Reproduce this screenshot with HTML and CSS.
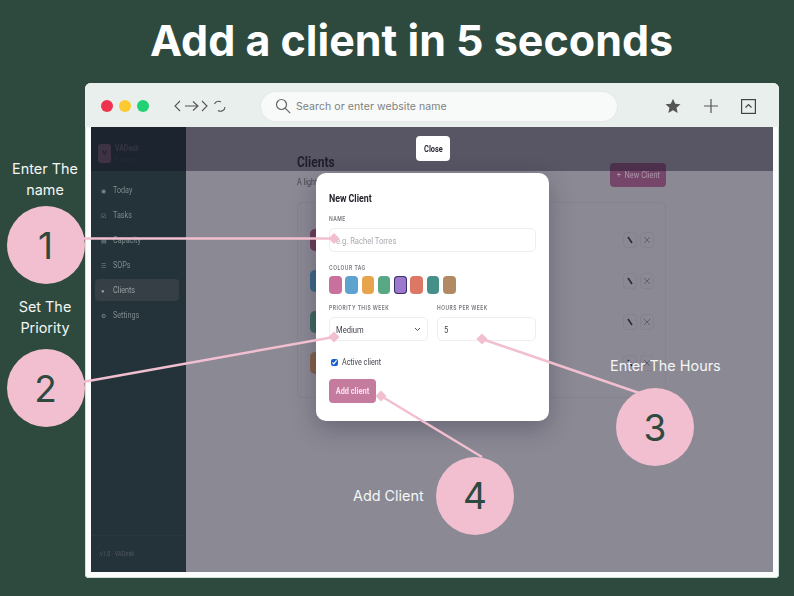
FILE: index.html
```html
<!DOCTYPE html>
<html lang="en">
<head>
<meta charset="utf-8">
<title>Add a client in 5 seconds</title>
<link rel="stylesheet" href="styles.css">
</head>
<body>
<div class="stage">
  <h1 class="headline">Add a client in 5 seconds</h1>
  <div class="window">
    <div class="toolbar">
      <div class="dots"><span class="dot red"></span><span class="dot yellow"></span><span class="dot green"></span></div>
      <svg class="nav-icons" width="52" height="14" viewBox="0 0 52 14" fill="none" stroke="#555" stroke-width="1.1">
        <path d="M6 2 1 7l5 5"/><path d="M11 7h13M19 2.500l5 4.500-5 4.500"/><path d="m28 2 5 5-5 5"/>
        <path d="M40.500 5a4.500 4.500 0 0 1 6.500-2M51 8a4.500 4.500 0 0 1-7 3.500"/>
      </svg>
      <div class="search">
        <svg width="16" height="16" viewBox="0 0 16 16" fill="none" stroke="#666" stroke-width="1.2"><circle cx="6.500" cy="6.500" r="5"/><path d="m10.200 10.200 5 5"/></svg>
        <span>Search or enter website name</span>
      </div>
      <div class="tools">
        <svg width="16" height="16" viewBox="0 0 16 16" fill="#555"><path d="m8 .8 2.200 4.900 5.300.6-4 3.500 1.200 5.300L8 12.300l-4.700 2.800 1.200-5.300-4-3.500 5.300-.6z"/></svg>
        <svg width="16" height="16" viewBox="0 0 16 16" fill="none" stroke="#555" stroke-width="1.200"><path d="M8 1v14M1 8h14"/></svg>
        <svg width="15" height="15" viewBox="0 0 15 15" fill="none" stroke="#444" stroke-width="1.200"><rect x=".6" y=".6" width="13.800" height="13.800"/><path d="m4.500 8.500 3-3 3 3"/></svg>
      </div>
    </div>
    <div class="app">
      <aside class="sidebar">
        <div class="brand">
          <span class="logo">V</span>
          <div><div class="brand-name"><span class="sq">VADesk</span></div><div class="brand-sub"><span class="sq">Planning</span></div></div>
        </div>
        <nav class="menu">
          <div class="menu-item"><span class="menu-icon">◉</span><span class="sq">Today</span></div>
          <div class="menu-item"><span class="menu-icon">☑</span><span class="sq">Tasks</span></div>
          <div class="menu-item"><span class="menu-icon">▤</span><span class="sq">Capacity</span></div>
          <div class="menu-item"><span class="menu-icon">☰</span><span class="sq">SOPs</span></div>
          <div class="menu-item active"><span class="menu-icon">●</span><span class="sq">Clients</span></div>
          <div class="menu-item"><span class="menu-icon">⚙</span><span class="sq">Settings</span></div>
        </nav>
        <div class="side-foot"><span class="sq">v1.0 · VADesk</span></div>
      </aside>
      <main class="page">
        <div class="page-head">
          <div>
            <h2 class="page-title"><span class="sq">Clients</span></h2>
            <p class="page-sub"><span class="sq">A lightweight list of clients</span></p>
          </div>
          <div class="new-btn"><span class="sq-c">+&nbsp; New Client</span></div>
        </div>
        <section class="client-card">
          <div class="client-row"><span class="client-tag t1"></span><span class="actions"><span class="act"><svg class="pencil" viewBox="0 0 14 16"><path d="M5 5l4 6"/></svg></span><span class="act"><svg class="cross" viewBox="0 0 14 16"><path d="m4 5 6 6m0-6-6 6"/></svg></span></span></div>
          <div class="client-row"><span class="client-tag t2"></span><span class="actions"><span class="act"><svg class="pencil" viewBox="0 0 14 16"><path d="M5 5l4 6"/></svg></span><span class="act"><svg class="cross" viewBox="0 0 14 16"><path d="m4 5 6 6m0-6-6 6"/></svg></span></span></div>
          <div class="client-row"><span class="client-tag t3"></span><span class="actions"><span class="act"><svg class="pencil" viewBox="0 0 14 16"><path d="M5 5l4 6"/></svg></span><span class="act"><svg class="cross" viewBox="0 0 14 16"><path d="m4 5 6 6m0-6-6 6"/></svg></span></span></div>
          <div class="client-row"><span class="client-tag t4"></span><span class="actions"><span class="act"><svg class="pencil" viewBox="0 0 14 16"><path d="M5 5l4 6"/></svg></span><span class="act"><svg class="cross" viewBox="0 0 14 16"><path d="m4 5 6 6m0-6-6 6"/></svg></span></span></div>
        </section>
      </main>
      <div class="band"></div>
      <div class="close-btn"><span class="sq-c">Close</span></div>
      <form class="modal">
        <div class="modal-title"><span class="sq">New Client</span></div>
        <div class="label first"><span class="sq">NAME</span></div>
        <div class="field placeholder"><span class="sq">e.g. Rachel Torres</span></div>
        <div class="label gap-lg"><span class="sq">COLOUR TAG</span></div>
        <div class="swatches">
          <span class="swatch s1"></span><span class="swatch s2"></span><span class="swatch s3"></span><span class="swatch s4"></span>
          <span class="swatch s5 selected"></span><span class="swatch s6"></span><span class="swatch s7"></span><span class="swatch s8"></span>
        </div>
        <div class="two-col">
          <div>
            <div class="label"><span class="sq">PRIORITY THIS WEEK</span></div>
            <div class="field select"><span class="sq">Medium</span>
              <svg width="7" height="5" viewBox="0 0 7 5" fill="none" stroke="#555" stroke-width="1"><path d="m1 1 2.500 2.500L6 1"/></svg>
            </div>
          </div>
          <div>
            <div class="label"><span class="sq">HOURS PER WEEK</span></div>
            <div class="field"><span class="sq">5</span></div>
          </div>
        </div>
        <label class="check-row"><input class="check" type="checkbox" checked><span class="sq">Active client</span></label>
        <div class="submit"><span class="sq-c">Add client</span></div>
      </form>
    </div>
  </div>

  <svg class="connectors" width="794" height="596" viewBox="0 0 794 596" fill="none" stroke="#f2bfd0" stroke-width="2.500">
    <path d="M80 238.500H334"/><path d="M80 382.500 334 337"/><path d="M482 339 645 395"/><path d="M381 396 482 457"/>
    <g fill="#f2bfd0" stroke="none">
      <path d="m334 233 5.500 5.500-5.500 5.500-5.500-5.500z"/>
      <path d="m334 331.500 5.500 5.500-5.500 5.500-5.500-5.500z"/>
      <path d="m482 333.500 5.500 5.500-5.500 5.500-5.500-5.500z"/>
      <path d="m381 390.500 5.500 5.500-5.500 5.500-5.500-5.500z"/>
    </g>
  </svg>
  <div class="badge b1">1</div>
  <div class="badge b2">2</div>
  <div class="badge b3">3</div>
  <div class="badge b4">4</div>
  <div class="note n1">Enter The<br>name</div>
  <div class="note n2">Set The<br>Priority</div>
  <div class="note n3">Enter The Hours</div>
  <div class="note n4">Add Client</div>
</div>
</body>
</html>
```
FILE: styles.css
```css
* { box-sizing: border-box; }
html, body { margin: 0; padding: 0; }
body { background: #2e4a3f; font-family: Inter, "Liberation Sans", sans-serif; }
.stage { position: relative; width: 794px; height: 596px; overflow: hidden; background: #2e4a3f; }
.headline { margin: 0; padding: 13px 0 0 29px; height: 83px; text-align: center; color: #fff; font-size: 43px; line-height: 54px; font-weight: 700; }

.sq { display: inline-block; transform: scaleX(.8); transform-origin: left center; white-space: nowrap; }
.sq-c { display: inline-block; transform: scaleX(.82); transform-origin: center; white-space: nowrap; }

.window { display: flex; flex-direction: column; width: 694px; height: 495px; margin-left: 85px; padding: 0 6px 6px; background: #fbfdfc; border-radius: 6px 6px 4px 4px; box-shadow: inset 0 0 0 1px #cfe0d8; }
.toolbar { display: flex; align-items: center; flex: 0 0 44px; margin: 0 -6px; padding: 2px 23px 0 16px; background: #e9efed; border-radius: 6px 6px 0 0; }
.dots { display: flex; gap: 6px; }
.dot { width: 12px; height: 12px; border-radius: 50%; }
.red { background: #ee3350; } .yellow { background: #fcc92e; } .green { background: #20d273; }
.nav-icons { margin-left: 25px; }
.search { display: flex; align-items: center; gap: 5px; width: 356px; height: 29px; margin-left: 35px; padding-left: 14px; border-radius: 15px; background: #f8faf9; box-shadow: 0 0 2px #d8dfdc; color: #7c8180; font-size: 10.500px; letter-spacing: .08px; }
.tools { display: flex; align-items: center; gap: 22px; margin-left: auto; }

.app { position: relative; display: flex; flex: 1; min-height: 0; overflow: hidden; background: #8b8994; font-family: Roboto, sans-serif; }
.sidebar { display: flex; flex-direction: column; flex: 0 0 95px; background: #24333a; color: #7f8a8c; filter: blur(.5px); }
.brand { display: flex; align-items: center; gap: 4px; height: 44px; padding: 8px 7px 0; font-size: 8.500px; color: #4c4d5a; }
.logo { display: flex; align-items: center; justify-content: center; flex: 0 0 13px; height: 19px; border-radius: 3px; background: #5d4a60; color: #35303f; font-size: 7px; font-weight: 700; }
.brand-name { font-weight: 700; }
.brand-sub { font-size: 6.500px; color: #383b48; margin-top: 3px; }
.menu { display: flex; flex-direction: column; gap: 3px; padding: 8px 7px 0 4px; font-size: 9px; }
.menu-item { display: flex; align-items: center; height: 22px; padding-left: 6px; border-radius: 4px; }
.menu-icon { flex: 0 0 12px; font-size: 6px; }
.active { background: #353f45; color: #989fa2; }
.side-foot { margin-top: auto; height: 37px; padding: 14px 9px 0; border-top: 1px solid #2a383f; font-size: 7px; color: #4f585d; }

.page { flex: 1; padding: 26px 107px 0 111px; filter: blur(.5px); }
.page-head { display: flex; justify-content: space-between; align-items: flex-start; height: 49px; }
.page-title { margin: 0; font-size: 15px; line-height: 18px; color: #2a2934; font-weight: 700; }
.page-sub { margin: 6px 0 0; font-size: 9px; line-height: 10px; color: #45444f; white-space: nowrap; }
.new-btn { display: flex; align-items: center; justify-content: center; width: 56px; height: 24px; margin-top: 10px; border-radius: 4px; background: #75466a; color: #ad98a9; font-size: 9px; }
.client-card { height: 196px; padding: 16px 11px 0 12px; border: 1px solid #85838e; border-radius: 6px; }
.client-row { display: flex; justify-content: space-between; align-items: center; height: 41px; }
.client-tag { width: 22px; height: 22px; border-radius: 5px; }
.t1 { background: #6b3d5c; } .t2 { background: #3e6688; } .t3 { background: #3d6860; } .t4 { background: #84604a; }
.actions { display: flex; gap: 3px; }
.act { display: flex; align-items: center; justify-content: center; width: 14px; height: 16px; border: 1px solid #84828d; border-radius: 4px; }
.pencil { width: 14px; height: 16px; flex: none; fill: none; stroke: #2b2a38; stroke-width: 1.600; }
.cross { width: 14px; height: 16px; flex: none; fill: none; stroke: #55545f; stroke-width: .8; }

.band { position: absolute; left: 0; top: 0; right: 0; height: 44px; background: rgba(18, 16, 34, .42); }
.close-btn { position: absolute; left: 325px; top: 9px; display: flex; align-items: center; justify-content: center; width: 34px; height: 25px; border-radius: 4px; background: #fff; color: #2b2a36; font-size: 9px; font-weight: 700; }

.modal { position: absolute; left: 225px; top: 46px; width: 233px; height: 248px; padding: 20px 13px 0; border-radius: 10px; background: #fff; box-shadow: 0 8px 24px rgba(30, 25, 45, .3); color: #2b2a36; }
.modal-title { font-size: 11px; line-height: 12px; font-weight: 700; color: #23222c; }
.label { margin-bottom: 5px; font-size: 6.200px; line-height: 8px; letter-spacing: .6px; font-weight: 600; color: #75757d; font-family: Inter, sans-serif; white-space: nowrap; }
.first { margin-top: 10px; }
.gap-lg { margin-top: 12px; margin-bottom: 4px; }
.field { display: flex; align-items: center; height: 24px; padding-left: 6px; border: 1px solid #eeeef1; border-radius: 5px; font-size: 9.500px; color: #45444e; }
.placeholder { color: #a9a9b0; }
.select { justify-content: space-between; padding-right: 6px; }
.swatches { display: flex; gap: 3.800px; }
.swatch { width: 12.500px; height: 18px; border-radius: 4px; }
.s1 { background: #c9709c; } .s2 { background: #5ea3cf; } .s3 { background: #e8a44c; } .s4 { background: #58a886; }
.s5 { background: #9c79cc; } .s6 { background: #dd7766; } .s7 { background: #46908a; } .s8 { background: #b18a63; }
.selected { box-shadow: inset 0 0 0 1px #3a2f66; }
.two-col { display: grid; grid-template-columns: 99px 99px; gap: 9px; margin-top: 10px; }
.check-row { display: flex; align-items: center; gap: 4px; height: 10px; margin-top: 16px; font-size: 9px; color: #45444e; }
.check { width: 7px; height: 7px; margin: 0 0 0 2px; accent-color: #1a5fd0; }
.submit { display: flex; align-items: center; justify-content: center; width: 47px; height: 24px; margin-top: 12px; border-radius: 4px; background: #c57b9e; color: #f4e3ec; font-size: 9px; font-weight: 700; }

.connectors { position: absolute; left: 0; top: 0; }
.badge { position: absolute; display: flex; align-items: center; justify-content: center; width: 78px; height: 78px; border-radius: 50%; background: #f2bfd0; color: #2e4a3f; font-size: 37px; }
.b1 { left: 6.500px; top: 206px; }
.b2 { left: 6.500px; top: 349px; }
.b3 { left: 616px; top: 388px; }
.b4 { left: 436px; top: 456.500px; }
.note { position: absolute; color: #f4f6f5; font-size: 14.400px; line-height: 21px; text-align: center; white-space: nowrap; }
.n1 { left: 0; top: 158px; width: 90px; }
.n2 { left: 0; top: 296px; width: 90px; }
.n3 { left: 610px; top: 355px; }
.n4 { left: 353px; top: 485px; }
```
